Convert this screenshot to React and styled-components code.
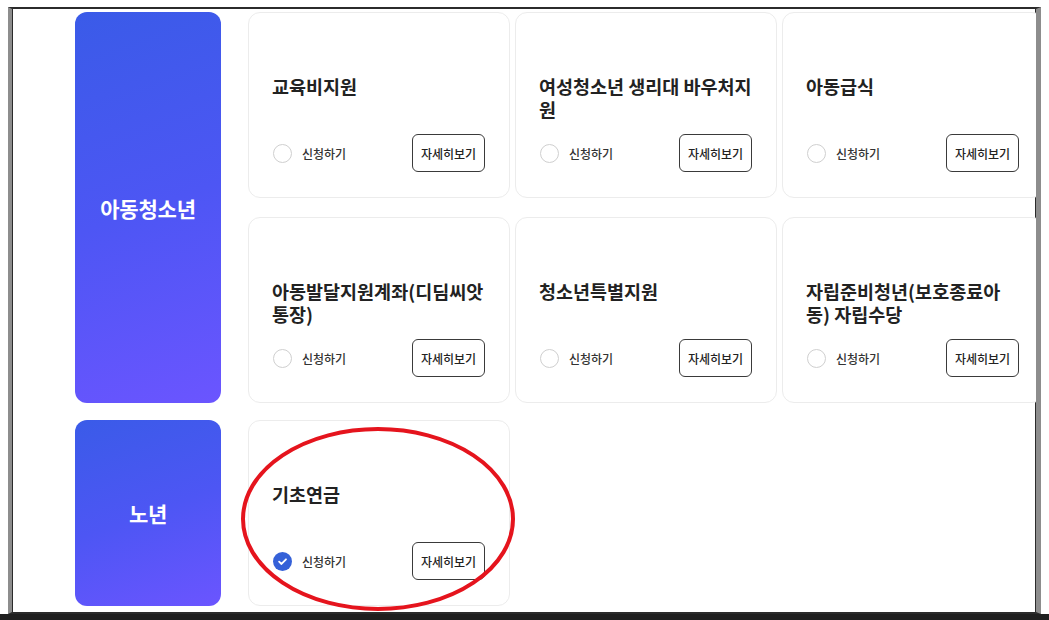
import styled, { createGlobalStyle } from "styled-components";

const GlobalStyle = createGlobalStyle`
  html, body {
    margin: 0;
    padding: 0;
    background: #ffffff;
  }
  body {
    font-family: "Noto Sans CJK KR", "Noto Sans", sans-serif;
    color: #222;
  }
`;

const groups = [
  {
    name: "아동청소년",
    items: [
      { title: "교육비지원" },
      { title: "여성청소년 생리대 바우처지원" },
      { title: "아동급식" },
      { title: "아동발달지원계좌(디딤씨앗통장)" },
      { title: "청소년특별지원" },
      { title: "자립준비청년(보호종료아동) 자립수당" },
    ],
  },
  {
    name: "노년",
    items: [{ title: "기초연금", checked: true }],
  },
];

export default function App() {
  return (
    <>
      <GlobalStyle />
      <Frame>
        <GroupList>
          {groups.map((group) => (
            <Group key={group.name}>
              <Category>{group.name}</Category>
              <CardGrid>
                {group.items.map((item) => (
                  <Card key={item.title}>
                    <Title>{item.title}</Title>
                    <Actions>
                      <Apply>
                        <Radio checked={item.checked}>
                          {item.checked && (
                            <svg width="11" height="11" viewBox="0 0 12 12">
                              <path
                                d="M2.3 6.2 L4.9 8.7 L9.8 3.6"
                                fill="none"
                                stroke="#fff"
                                strokeWidth="2"
                                strokeLinecap="round"
                                strokeLinejoin="round"
                              />
                            </svg>
                          )}
                        </Radio>
                        신청하기
                      </Apply>
                      <DetailButton>자세히보기</DetailButton>
                    </Actions>
                  </Card>
                ))}
              </CardGrid>
            </Group>
          ))}
        </GroupList>
        <Annotation width="274" height="184" viewBox="0 0 274 184">
          <ellipse
            cx="137"
            cy="92"
            rx="135"
            ry="90"
            fill="none"
            stroke="#e5141d"
            strokeWidth="4"
          />
        </Annotation>
      </Frame>
      <BottomBar />
    </>
  );
}

const Frame = styled.div`
  position: relative;
  box-sizing: border-box;
  width: 1033px;
  height: 607px;
  margin: 7px 0 0 8px;
  padding: 3px 0 0 63px;
  overflow: hidden;
  border-top: 2px solid #2b2b2b;
  border-bottom: 2px solid #2b2b2b;
  border-left: 4px solid #8d8d8d;
  border-right: 5px solid #8d8d8d;
  box-shadow: inset 1px 0 0 #2b2b2b, inset -1px 0 0 #2b2b2b;
`;

const BottomBar = styled.div`
  height: 6px;
  background: #1f1f1f;
`;

const GroupList = styled.div`
  display: flex;
  flex-direction: column;
  gap: 17px;
`;

const Group = styled.section`
  display: flex;
  gap: 27px;
`;

const Category = styled.div`
  flex: 0 0 146px;
  display: flex;
  align-items: center;
  justify-content: center;
  border-radius: 12px;
  background: linear-gradient(160deg, #3a5be8 0%, #4d56f4 50%, #6b55ff 100%);
  color: #fff;
  font-size: 21px;
  font-weight: 700;
  letter-spacing: -0.2px;
`;

const CardGrid = styled.div`
  display: grid;
  grid-template-columns: repeat(3, 262px);
  grid-auto-rows: 186px;
  column-gap: 5px;
  row-gap: 19px;
`;

const Card = styled.div`
  box-sizing: border-box;
  display: flex;
  flex-direction: column;
  padding: 62px 24px 25px 23px;
  border: 1px solid #ececec;
  border-radius: 12px;
  background: #fff;
`;

const Title = styled.h3`
  margin: 0;
  font-size: 18.5px;
  font-weight: 700;
  line-height: 23px;
  letter-spacing: 0;
  color: #222;
`;

const Actions = styled.div`
  margin-top: auto;
  display: flex;
  align-items: center;
  justify-content: space-between;
`;

const Apply = styled.label`
  display: flex;
  align-items: center;
  gap: 10px;
  padding-left: 1px;
  font-size: 12px;
  font-weight: 500;
  color: #333;
`;

const Radio = styled.span`
  box-sizing: border-box;
  width: 19px;
  height: 19px;
  border-radius: 50%;
  display: flex;
  align-items: center;
  justify-content: center;
  border: ${(props) => (props.checked ? "none" : "1.5px solid #cfcfcf")};
  background: ${(props) => (props.checked ? "#3561d8" : "#fff")};
`;

const DetailButton = styled.button`
  box-sizing: border-box;
  width: 73px;
  height: 38px;
  padding: 0;
  border: 1px solid #3a3a3a;
  border-radius: 6px;
  background: #fff;
  font-family: inherit;
  font-size: 12px;
  font-weight: 500;
  color: #222;
`;

const Annotation = styled.svg`
  position: absolute;
  left: 229px;
  top: 418px;
  pointer-events: none;
`;
